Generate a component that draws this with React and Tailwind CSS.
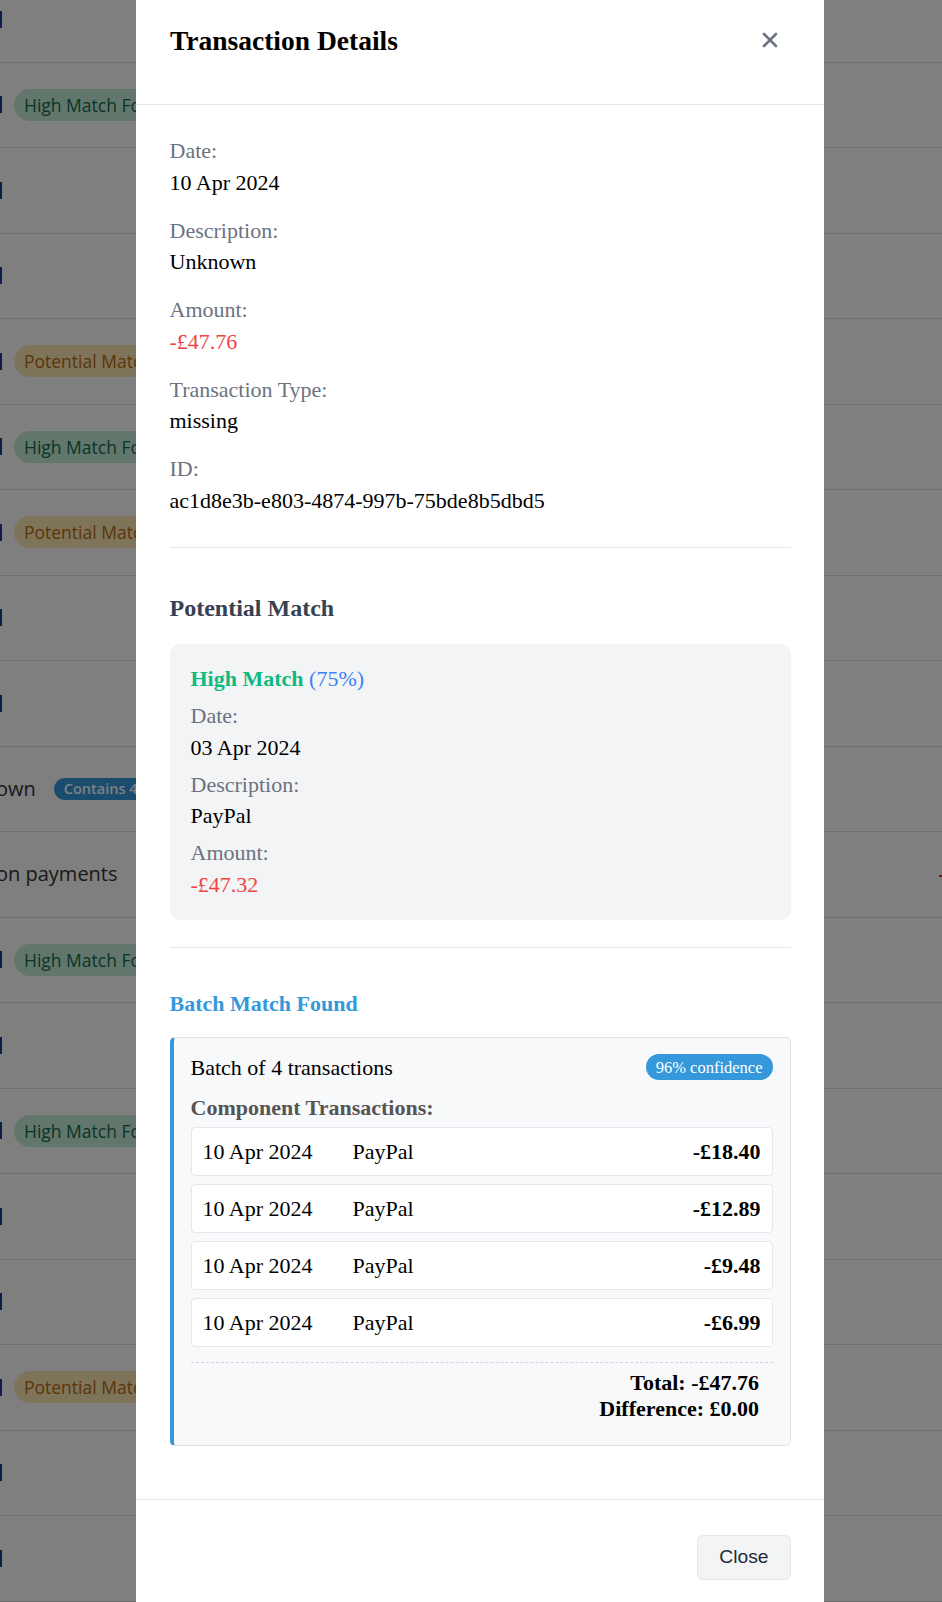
import React from 'react';

const BG_ROWS = [
  { badge: null },
  { badge: 'high' },
  { badge: null },
  { badge: null },
  { badge: 'potential' },
  { badge: 'high' },
  { badge: 'potential' },
  { badge: null },
  { badge: null },
  { text: 'own', batch: true },
  { text: 'on payments', red: true },
  { badge: 'high' },
  { badge: null },
  { badge: 'high' },
  { badge: null },
  { badge: null },
  { badge: 'potential' },
  { badge: null },
  { badge: null },
  { badge: null },
];

const DETAILS = [
  { label: 'Date:', value: '10 Apr 2024' },
  { label: 'Description:', value: 'Unknown' },
  { label: 'Amount:', value: '-£47.76', red: true },
  { label: 'Transaction Type:', value: 'missing' },
  { label: 'ID:', value: 'ac1d8e3b-e803-4874-997b-75bde8b5dbd5' },
];

const COMPONENTS = [
  { date: '10 Apr 2024', desc: 'PayPal', amount: '-£18.40' },
  { date: '10 Apr 2024', desc: 'PayPal', amount: '-£12.89' },
  { date: '10 Apr 2024', desc: 'PayPal', amount: '-£9.48' },
  { date: '10 Apr 2024', desc: 'PayPal', amount: '-£6.99' },
];

function BgRow({ row }) {
  return (
    <div className="h-[85.5px] border-b border-[#dcdcdc] flex items-center gap-[12px] relative">
      {row.text ? (
        <span className="text-[20px] text-[#333] -ml-[4px] mr-[6px]">{row.text}</span>
      ) : (
        <span className="block w-[2px] h-[17px] bg-[#1a3f8f]" />
      )}
      {row.badge === 'high' && (
        <span className="rounded-full bg-[#c6ecd9] text-[#0f6b50] text-[17.5px] px-[10px] h-[32px] flex items-center whitespace-nowrap">
          High Match Found
        </span>
      )}
      {row.badge === 'potential' && (
        <span className="rounded-full bg-[#fce8b2] text-[#b86a12] text-[17.5px] px-[10px] h-[32px] flex items-center whitespace-nowrap">
          Potential Match
        </span>
      )}
      {row.batch && (
        <span className="rounded-full bg-[#3498db] text-white font-semibold text-[14.5px] px-[10px] h-[22px] flex items-center whitespace-nowrap">
          Contains 4 Items
        </span>
      )}
      {row.red && <span className="absolute right-0 top-[43px] w-[3px] h-[2px] bg-[#e53935]" />}
    </div>
  );
}

function CloseIcon() {
  return (
    <svg width="16" height="16" viewBox="0 0 16 16" fill="none">
      <path d="M2 2L14 14M14 2L2 14" stroke="#6b7280" strokeWidth="2.6" strokeLinecap="round" />
    </svg>
  );
}

export default function App() {
  return (
    <div className="relative w-[942px] h-[1602px] overflow-hidden bg-white" style={{ fontFamily: '"Open Sans", "Noto Sans", sans-serif' }}>
      {/* Background table */}
      <div className="-mt-[23px]">
        {BG_ROWS.map((r, i) => (
          <BgRow key={i} row={r} />
        ))}
      </div>

      {/* Overlay */}
      <div className="absolute inset-0 bg-black/50">
        <div
          className="absolute left-[136px] top-0 w-[688px] bg-white text-black"
          style={{ fontFamily: '"Liberation Serif", "Times New Roman", serif' }}
        >
          {/* Header */}
          <div className="h-[105px] border-b border-[#e5e7eb] flex justify-between items-start px-[34px] pt-[25px]">
            <h2 className="text-[27.5px] font-bold leading-[32px]">Transaction Details</h2>
            <button className="w-[40px] h-[40px] -mt-[5px] flex items-center justify-center">
              <CloseIcon />
            </button>
          </div>

          {/* Body */}
          <div className="px-[33.5px] pt-[30px] pb-[53px] text-[22px] leading-[31.5px]">
            <div className="flex flex-col gap-[16.5px]">
              {DETAILS.map((d) => (
                <div key={d.label}>
                  <div className="text-[#6b7280]">{d.label}</div>
                  <div className={d.red ? 'text-[#ef4444]' : 'text-black'}>{d.value}</div>
                </div>
              ))}
            </div>

            <div className="mt-[30.5px] border-t border-[#e5e7eb] pt-[44.5px]">
              <h3 className="text-[24px] font-bold leading-[33px] text-[#374151]">Potential Match</h3>
              <div className="mt-[19px] rounded-[10px] bg-[#f3f4f6] px-[21px] pt-[19px] pb-[20px]">
                <div className="mb-[5.5px]">
                  <span className="font-bold text-[#10b981]">High Match</span>{' '}
                  <span className="text-[#3b82f6]">(75%)</span>
                </div>
                <div className="flex flex-col gap-[5.5px]">
                  <div>
                    <div className="text-[#6b7280]">Date:</div>
                    <div>03 Apr 2024</div>
                  </div>
                  <div>
                    <div className="text-[#6b7280]">Description:</div>
                    <div>PayPal</div>
                  </div>
                  <div>
                    <div className="text-[#6b7280]">Amount:</div>
                    <div className="text-[#ef4444]">-£47.32</div>
                  </div>
                </div>
              </div>
            </div>

            <div className="mt-[26.5px] border-t border-[#e5e7eb] pt-[40px]">
              <h3 className="font-bold text-[#3498db]">Batch Match Found</h3>
              <div className="mt-[18px] rounded-[5px] border border-[#dee2e6] border-l-4 border-l-[#3498db] bg-[#f8f9fa] pl-[17px] pr-[17px] pt-[13.5px] pb-[22.5px]">
                <div className="flex items-center justify-between mb-[8.5px]">
                  <span>Batch of 4 transactions</span>
                  <span className="rounded-full bg-[#3498db] text-white text-[16.5px] leading-[19px] px-[10px] py-[3.5px]">
                    96% confidence
                  </span>
                </div>
                <div className="font-bold text-[#555555] mb-[4px]">Component Transactions:</div>
                <div className="flex flex-col gap-[8.4px]">
                  {COMPONENTS.map((c, i) => (
                    <div key={i} className="flex items-center bg-white border border-[#e5e7eb] rounded-[4px] px-[11px] py-[7.6px]">
                      <span className="w-[150px]">{c.date}</span>
                      <span className="flex-1">{c.desc}</span>
                      <span className="font-bold">{c.amount}</span>
                    </div>
                  ))}
                </div>
                <div className="mt-[14.7px] border-t border-dashed border-[#d1d5db] pt-[7.5px] pr-[13.5px] text-right font-bold leading-[26px]">
                  <div>Total: -£47.76</div>
                  <div>Difference: £0.00</div>
                </div>
              </div>
            </div>
          </div>

          {/* Footer */}
          <div className="border-t border-[#e5e7eb] flex justify-end px-[33px] pt-[35px] pb-[33px]">
            <button
              className="h-[45px] px-[21.5px] rounded-[6px] border border-[#e5e7eb] bg-[#f3f4f6] text-[19.25px] text-[#1f2937]"
              style={{ fontFamily: '"Liberation Sans", Arial, sans-serif' }}
            >
              Close
            </button>
          </div>
        </div>
      </div>
    </div>
  );
}
